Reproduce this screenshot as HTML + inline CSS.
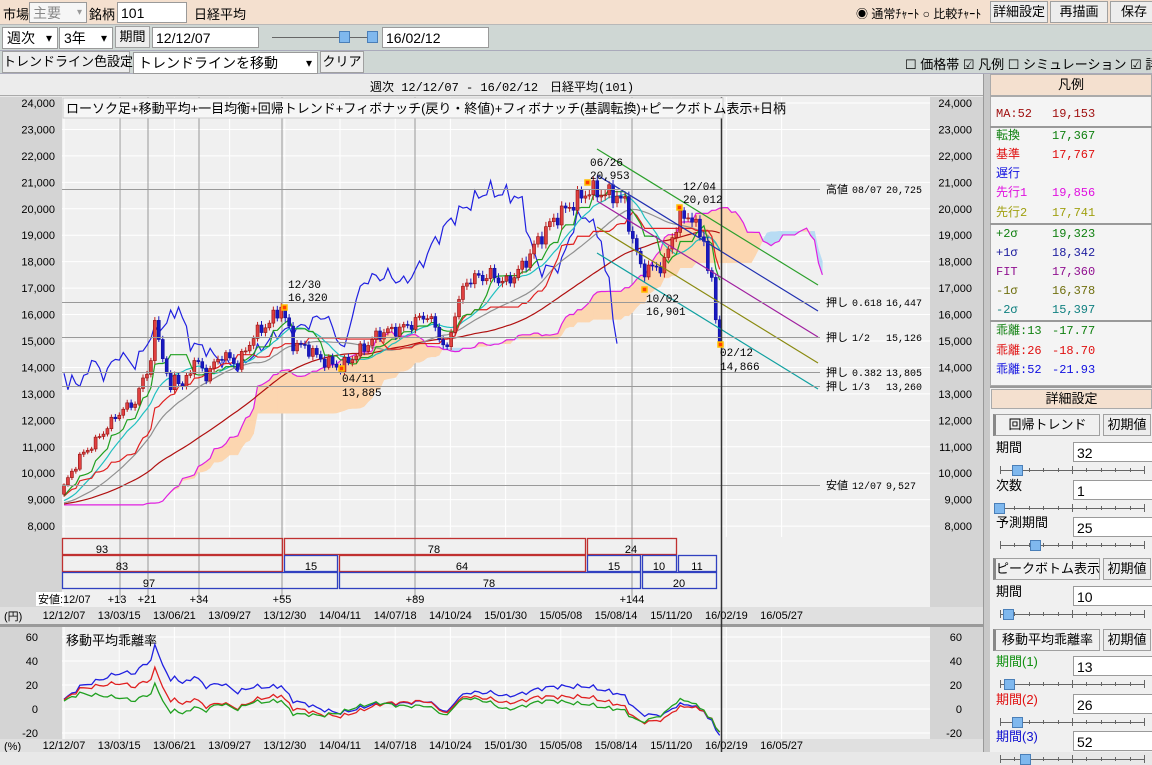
<!DOCTYPE html>
<html><head><meta charset="utf-8">
<style>
*{box-sizing:border-box;margin:0;padding:0}
body{width:1152px;height:752px;overflow:hidden;background:#e8e8e8;font-family:"Liberation Sans","Noto Sans CJK JP",sans-serif;font-size:13px;color:#000;position:relative}
.a{position:absolute;white-space:nowrap}
.bar1{left:0;top:0;width:1152px;height:25px;background:#f4e0cf;border-bottom:1px solid #b8b8b8}
.bar2{left:0;top:25px;width:1152px;height:26px;background:#cfd7d4;border-bottom:1px solid #aab}
.bar3{left:0;top:51px;width:1152px;height:23px;background:#cfd7d4;border-bottom:1px solid #aab}
.inp{background:#fff;border:1px solid #9a9a9a;height:21px;padding:1px 3px;line-height:18px;font-size:14px}
.btn{background:#ededed;border:1px solid #a0a0a0;height:22px;text-align:center;line-height:20px;font-size:13px}
.sel{background:#fff;border:1px solid #9a9a9a;height:22px;padding:0 4px;line-height:20px;font-size:14px}
.sel:after{content:"▾";position:absolute;right:5px;top:0;font-size:12px}
.lg{font-family:"Liberation Mono","Noto Sans CJK JP",monospace;font-size:12px;line-height:14px;height:14px}
.sep{height:2px;background:#999;left:990px;width:162px}
</style></head><body>
<div class="a bar1"></div>
<div class="a" style="left:3px;top:4px">市場</div>
<div class="a inp" style="left:29px;top:2px;width:58px;color:#888;background:#f6f6f6">主要<span style="position:absolute;right:4px;font-size:10px;color:#999">▾</span></div>
<div class="a" style="left:89px;top:4px">銘柄</div>
<div class="a inp" style="left:117px;top:2px;width:70px">101</div>
<div class="a" style="left:194px;top:4px">日経平均</div>
<div class="a" style="left:856px;top:5px;font-size:12px">◉ 通常ﾁｬｰﾄ ○ 比較ﾁｬｰﾄ</div>
<div class="a btn" style="left:990px;top:1px;width:58px">詳細設定</div>
<div class="a btn" style="left:1050px;top:1px;width:58px">再描画</div>
<div class="a btn" style="left:1110px;top:1px;width:48px">保存</div>
<div class="a bar2"></div>
<div class="a sel" style="left:2px;top:27px;width:56px">週次</div>
<div class="a sel" style="left:59px;top:27px;width:54px">3年</div>
<div class="a btn" style="left:115px;top:26px;width:35px">期間</div>
<div class="a inp" style="left:152px;top:27px;width:107px">12/12/07</div>
<div class="a" style="left:261px;top:27px;width:120px;height:22px;background:#cfd7d4">
 <div class="a" style="left:11px;top:10px;width:95px;height:1px;background:#666"></div>
 <div class="a" style="left:78px;top:4px;width:11px;height:12px;background:#7fb8ee;border:1px solid #4a7fb8"></div>
 <div class="a" style="left:106px;top:4px;width:11px;height:12px;background:#7fb8ee;border:1px solid #4a7fb8"></div>
</div>
<div class="a inp" style="left:382px;top:27px;width:107px">16/02/12</div>
<div class="a bar3"></div>
<div class="a btn" style="left:2px;top:51px;width:128px">トレンドライン色設定</div>
<div class="a sel" style="left:133px;top:52px;width:185px">トレンドラインを移動</div>
<div class="a btn" style="left:320px;top:51px;width:44px">クリア</div>
<div class="a" style="left:905px;top:54px;font-size:13px">☐ 価格帯 ☑ 凡例 ☐ シミュレーション ☑ 詳</div>
<div class="a" style="left:0;top:74px;width:983px;height:22px;background:#ececec;border-bottom:1px solid #aaa"></div>
<div class="a" style="left:370px;top:78px;font-family:'Liberation Mono','Noto Sans CJK JP',monospace;font-size:12px">週次 12/12/07 - 16/02/12　日経平均(101)</div>
<div class="a" style="left:983px;top:74px;width:7px;height:678px;background:#c8c8c8;border-left:1px solid #999"></div>

<svg class="a" style="left:0;top:0" width="1152" height="752" xmlns="http://www.w3.org/2000/svg" font-family="Liberation Sans, Noto Sans CJK JP, sans-serif">
 <rect x="0" y="97" width="62" height="527" fill="#d4d4d4"/>
 <rect x="62" y="97" width="868" height="527" fill="#f0f0f0"/>
 <rect x="930" y="97" width="53" height="527" fill="#d4d4d4"/>
 <rect x="0" y="607" width="983" height="17" fill="#e0e0e0"/>
 <rect x="0" y="624" width="983" height="3" fill="#9a9a9a"/>
 <rect x="0" y="627" width="62" height="125" fill="#d4d4d4"/>
 <rect x="62" y="627" width="868" height="112" fill="#f0f0f0"/>
 <rect x="930" y="627" width="53" height="125" fill="#d4d4d4"/>
 <rect x="0" y="739" width="983" height="13" fill="#e0e0e0"/>
 <g id="grid"></g>
 <g id="cloud"></g>
 <g id="lines" fill="none" stroke-width="1.2"></g>
 <g id="candles"></g>
 <g fill="none" stroke-width="1.2">
  <line x1="597" y1="149" x2="818" y2="285" stroke="#2ca02c"/>
  <line x1="597" y1="175" x2="818" y2="311" stroke="#2030b0"/>
  <line x1="597" y1="201" x2="818" y2="337" stroke="#a020a0"/>
  <line x1="597" y1="227" x2="818" y2="363" stroke="#8a8a10"/>
  <line x1="597" y1="253" x2="818" y2="389" stroke="#10a0a0"/>
 </g>
 <g stroke="#999" stroke-width="1">
  <line x1="62" y1="189.5" x2="820" y2="189.5"/>
  <line x1="62" y1="302.5" x2="820" y2="302.5"/>
  <line x1="62" y1="337.5" x2="820" y2="337.5"/>
  <line x1="62" y1="372.5" x2="820" y2="372.5"/>
  <line x1="62" y1="386.5" x2="820" y2="386.5"/>
  <line x1="62" y1="485.5" x2="820" y2="485.5"/>
 </g>
 <line x1="721.5" y1="97" x2="721.5" y2="752" stroke="#333" stroke-width="1.5"/>
 <g font-size="11" font-family="Liberation Mono, Noto Sans CJK JP, monospace">
  <g font-size="10">
  <text x="826" y="193" font-size="11">高値</text><text x="852" y="193">08/07</text><text x="886" y="193">20,725</text>
  <text x="826" y="306" font-size="11">押し</text><text x="852" y="306">0.618</text><text x="886" y="306">16,447</text>
  <text x="826" y="341" font-size="11">押し</text><text x="852" y="341">1/2</text><text x="886" y="341">15,126</text>
  <text x="826" y="376" font-size="11">押し</text><text x="852" y="376">0.382</text><text x="886" y="376">13,805</text>
  <text x="826" y="390" font-size="11">押し</text><text x="852" y="390">1/3</text><text x="886" y="390">13,260</text>
  <text x="826" y="489" font-size="11">安値</text><text x="852" y="489">12/07</text><text x="886" y="489"> 9,527</text>
  </g>
  <text x="288" y="288">12/30</text><text x="288" y="301">16,320</text>
  <text x="342" y="382">04/11</text><text x="342" y="396">13,885</text>
  <text x="590" y="166">06/26</text><text x="590" y="179">20,953</text>
  <text x="683" y="190">12/04</text><text x="683" y="203">20,012</text>
  <text x="646" y="302">10/02</text><text x="646" y="315">16,901</text>
  <text x="720" y="356">02/12</text><text x="720" y="370">14,866</text>
 </g>
 <g fill="#ff4000" stroke="#ffc000" stroke-width="1.5">
  <rect x="282" y="305" width="5" height="5"/><rect x="339" y="366" width="5" height="5"/>
  <rect x="585" y="180" width="5" height="5"/><rect x="677" y="205" width="5" height="5"/>
  <rect x="642" y="287" width="5" height="5"/><rect x="718" y="342" width="5" height="5"/>
 </g>
 <rect x="63" y="98" width="660" height="20" fill="#f6f6f6" stroke="#ccc"/>
 <text x="66" y="113" font-size="13">ローソク足+移動平均+一目均衡+回帰トレンド+フィボナッチ(戻り・終値)+フィボナッチ(基調転換)+ピークボトム表示+日柄</text>
 <g id="yax" font-size="11" text-anchor="end"></g>
 <g fill="none" stroke-width="1.3" font-size="11">
  <rect x="62.5" y="538.5" width="220" height="16" stroke="#c03030"/>
  <rect x="284.5" y="538.5" width="301" height="16" stroke="#c03030"/>
  <rect x="587.5" y="538.5" width="89" height="16" stroke="#c03030"/>
  <rect x="62.5" y="555.5" width="220" height="16" stroke="#c03030"/>
  <rect x="284.5" y="555.5" width="53" height="16" stroke="#3040c0"/>
  <rect x="339.5" y="555.5" width="246" height="16" stroke="#c03030"/>
  <rect x="587.5" y="555.5" width="53" height="16" stroke="#3040c0"/>
  <rect x="642.5" y="555.5" width="34" height="16" stroke="#3040c0"/>
  <rect x="678.5" y="555.5" width="38" height="16" stroke="#3040c0"/>
  <rect x="62.5" y="572.5" width="275" height="16" stroke="#3040c0"/>
  <rect x="339.5" y="572.5" width="301" height="16" stroke="#3040c0"/>
  <rect x="642.5" y="572.5" width="74" height="16" stroke="#3040c0"/>
 </g>
 <g font-size="11" text-anchor="middle">
  <text x="102" y="553">93</text><text x="434" y="553">78</text><text x="631" y="553">24</text>
  <text x="122" y="570">83</text><text x="311" y="570">15</text><text x="462" y="570">64</text><text x="614" y="570">15</text><text x="659" y="570">10</text><text x="697" y="570">11</text>
  <text x="149" y="587">97</text><text x="489" y="587">78</text><text x="679" y="587">20</text>
  <text x="117" y="603">+13</text><text x="147" y="603">+21</text><text x="199" y="603">+34</text><text x="282" y="603">+55</text><text x="415" y="603">+89</text><text x="632" y="603">+144</text>
 </g>
 <rect x="36" y="592" width="28" height="14" fill="#fff"/>
 <text x="38" y="603" font-size="11">安値:12/07</text>
 <text x="4" y="620" font-size="11">(円)</text>
 <text x="4" y="750" font-size="11">(%)</text>
 <g id="dates" font-size="11" text-anchor="middle"></g>
 <text x="66" y="645" font-size="13">移動平均乖離率</text>
 <g id="dev" fill="none" stroke-width="1.3"></g>
</svg>

<div class="a" style="left:990px;top:96px;width:162px;height:290px;background:#f4f4f4;border:1px solid #aaa"></div>
<div class="a" style="left:990px;top:74px;width:162px;height:22px;background:#f4e0cf;border:1px solid #aaa;text-align:center;line-height:20px">凡例</div>
<div class="a lg" style="left:996px;top:107px;color:#a01010">MA:52</div><div class="a lg" style="left:1052px;top:107px;color:#a01010">19,153</div>
<div class="a sep" style="top:126px"></div>
<div class="a lg" style="left:996px;top:129px;color:#108010">転換</div><div class="a lg" style="left:1052px;top:129px;color:#108010">17,367</div>
<div class="a lg" style="left:996px;top:148px;color:#e01010">基準</div><div class="a lg" style="left:1052px;top:148px;color:#e01010">17,767</div>
<div class="a lg" style="left:996px;top:167px;color:#1010e0">遅行</div>
<div class="a lg" style="left:996px;top:186px;color:#e010e0">先行1</div><div class="a lg" style="left:1052px;top:186px;color:#e010e0">19,856</div>
<div class="a lg" style="left:996px;top:206px;color:#a0a010">先行2</div><div class="a lg" style="left:1052px;top:206px;color:#a0a010">17,741</div>
<div class="a sep" style="top:223px"></div>
<div class="a lg" style="left:996px;top:227px;color:#108010">+2σ</div><div class="a lg" style="left:1052px;top:227px;color:#108010">19,323</div>
<div class="a lg" style="left:996px;top:246px;color:#2020a0">+1σ</div><div class="a lg" style="left:1052px;top:246px;color:#2020a0">18,342</div>
<div class="a lg" style="left:996px;top:265px;color:#901090">FIT</div><div class="a lg" style="left:1052px;top:265px;color:#901090">17,360</div>
<div class="a lg" style="left:996px;top:284px;color:#707010">-1σ</div><div class="a lg" style="left:1052px;top:284px;color:#707010">16,378</div>
<div class="a lg" style="left:996px;top:303px;color:#108080">-2σ</div><div class="a lg" style="left:1052px;top:303px;color:#108080">15,397</div>
<div class="a sep" style="top:320px"></div>
<div class="a lg" style="left:996px;top:324px;color:#108010">乖離:13</div><div class="a lg" style="left:1052px;top:324px;color:#108010">-17.77</div>
<div class="a lg" style="left:996px;top:344px;color:#e01010">乖離:26</div><div class="a lg" style="left:1052px;top:344px;color:#e01010">-18.70</div>
<div class="a lg" style="left:996px;top:363px;color:#1010e0">乖離:52</div><div class="a lg" style="left:1052px;top:363px;color:#1010e0">-21.93</div>
<div class="a" style="left:990px;top:386px;width:162px;height:366px;background:#f0f0f0;border-top:2px solid #999"></div>
<div class="a" style="left:991px;top:389px;width:161px;height:20px;background:#f4e0cf;border:1px solid #aaa;text-align:center;line-height:18px;font-size:13px">詳細設定</div>
<div id="det"></div>

<script>
(function(){
var NS="http://www.w3.org/2000/svg";
function el(p,t,a){var e=document.createElementNS(NS,t);for(var k in a)e.setAttribute(k,a[k]);document.getElementById(p).appendChild(e);return e;}
function yP(v){return 103+(24000-v)*0.026444;}
function xW(i){return 64+i*3.95;}
function yD(v){return 709-v*1.2;}
for(var v=8000;v<=24000;v+=1000){var y=yP(v);el("grid","line",{x1:62,x2:930,y1:y,y2:y,stroke:"#fff"});
 var t=el("yax","text",{x:55,y:y+4});t.textContent=(v/1000)+",000";var t2=el("yax","text",{x:972,y:y+4});t2.textContent=(v/1000)+",000";}
var dl=["12/12/07","13/03/15","13/06/21","13/09/27","13/12/30","14/04/11","14/07/18","14/10/24","15/01/30","15/05/08","15/08/14","15/11/20","16/02/19","16/05/27"];
for(var i=0;i<dl.length;i++){var x=64+i*55.2;el("grid","line",{x1:x,x2:x,y1:97,y2:537,stroke:"#fff"});el("grid","line",{x1:x,x2:x,y1:627,y2:739,stroke:"#fff"});
 var t=el("dates","text",{x:x,y:619});t.textContent=dl[i];var t2=el("dates","text",{x:x,y:749});t2.textContent=dl[i];}
[120,148,199,282,415,632].forEach(function(x){el("grid","line",{x1:x,x2:x,y1:97,y2:600,stroke:"#999"});});
[60,40,20,0,-20].forEach(function(v){var y=yD(v);el("grid","line",{x1:62,x2:930,y1:y,y2:y,stroke:"#fff"});
 var t=el("yax","text",{x:38,y:y+4});t.textContent=v;var t2=el("yax","text",{x:962,y:y+4});t2.textContent=v;});
var K=[[0,9500],[4,10600],[8,11200],[14,12300],[18,12700],[22,14300],[23,15600],[25,14500],[27,13000],[28,13800],[30,13200],[33,14300],[36,13700],[40,14500],[44,14100],[48,15200],[52,15700],[55,16300],[58,14900],[62,14700],[65,14300],[70,14000],[74,14500],[80,15300],[86,15500],[92,16000],[95,15200],[97,14600],[99,16100],[102,17300],[108,17500],[112,17200],[116,17800],[120,18800],[124,19600],[128,20100],[133,20700],[136,20600],[140,20500],[142,20200],[144,18800],[146,17800],[148,17700],[152,17900],[154,19000],[156,19600],[158,19800],[160,19300],[162,18900],[163,17600],[164,17200],[165,16000],[166,14900]];
var P=52,N=167,c=[];
for(var i=-P;i<0;i++)c.push(8800+Math.sin(i*0.9)*120+(i>-6?(i+6)*100:0));
for(var i=0;i<N;i++){var j=0;while(j<K.length-1&&K[j+1][0]<i)j++;var a=K[j],b=K[Math.min(j+1,K.length-1)];
 var v=b[0]==a[0]?a[1]:a[1]+(b[1]-a[1])*(i-a[0])/(b[0]-a[0]);
 if(i<N-1)v+=v*0.012*(Math.sin(i*1.7)+0.6*Math.sin(i*3.1+1));c.push(v);}
function C(i){return c[i+P];}
function ma(i,n){var s=0;for(var k=0;k<n;k++)s+=C(i-k);return s/n;}
function mid(i,n){var h=-1e9,l=1e9;for(var k=0;k<n;k++){var v=C(i-k);h=Math.max(h,v*1.01);l=Math.min(l,v*0.99);}return (h+l)/2;}
function pl(g,pts,col){el(g,"polyline",{points:pts.join(" "),stroke:col});}
var m13=[],m26=[],m52=[],tk=[],kj=[],ck=[];
for(var i=0;i<N;i++){var x=xW(i);m13.push(x+","+yP(ma(i,13)));m26.push(x+","+yP(ma(i,26)));m52.push(x+","+yP(ma(i,52)));
 tk.push(x+","+yP(mid(i,9)));kj.push(x+","+yP(mid(i,26)));if(i>=26)ck.push(xW(i-26)+","+yP(C(i)));}
var s1=[],s2=[];
for(var i=-26;i<N;i++){s1.push((mid(i,9)+mid(i,26))/2);s2.push(mid(i,52));}
for(var k=0;k<s1.length-1;k++){var i=k;var x0=xW(i),x1=xW(i+1);
 var col=s1[k]>=s2[k]?"#fcd6b0":"#b8dcf4";
 el("cloud","polygon",{points:x0+","+yP(s1[k])+" "+x1+","+yP(s1[k+1])+" "+x1+","+yP(s2[k+1])+" "+x0+","+yP(s2[k]),fill:col,stroke:col,"stroke-width":0.5});}
var p1=[],p2=[];for(var k=0;k<s1.length;k++){p1.push(xW(k)+","+yP(s1[k]));p2.push(xW(k)+","+yP(s2[k]));}
pl("lines",p2,"#b0a020");pl("lines",p1,"#e020e0");
pl("lines",ck,"#2020e0");pl("lines",m52,"#b01010");pl("lines",m26,"#909090");pl("lines",m13,"#20c0c0");
pl("lines",kj,"#e02020");pl("lines",tk,"#20a020");
for(var i=0;i<N;i++){var o=C(i-1),cl=C(i),x=xW(i);var hi=Math.max(o,cl)*(1.006+0.004*Math.abs(Math.sin(i*2.3))),lo=Math.min(o,cl)*(0.994-0.004*Math.abs(Math.cos(i*1.9)));
 var up=cl>=o,col=up?"#c02020":"#1818c0";
 el("candles","line",{x1:x,x2:x,y1:yP(hi),y2:yP(lo),stroke:col});
 var yt=yP(Math.max(o,cl)),yb=yP(Math.min(o,cl));
 el("candles","rect",{x:x-1.5,y:yt,width:3,height:Math.max(1,yb-yt),fill:up?"#e04040":"#1818c0",stroke:up?"#901010":"#1010a0","stroke-width":0.6});}
var d1=[],d2=[],d3=[];
for(var i=0;i<N;i++){var x=xW(i);d1.push(x+","+yD((C(i)/ma(i,13)-1)*100));d2.push(x+","+yD((C(i)/ma(i,26)-1)*100));d3.push(x+","+yD((C(i)/ma(i,52)-1)*100));}
pl("dev",d3,"#2020e0");pl("dev",d2,"#e02020");pl("dev",d1,"#20a020");
var H="";
function sec(y,t){H+='<div class="a btn" style="left:993px;top:'+y+'px;width:107px;height:22px;font-size:13px;background:#f0f0f0;border-left:3px solid #888">'+t+'</div><div class="a btn" style="left:1103px;top:'+y+'px;width:48px;height:22px">初期値</div>';}
function row(y,t,v,col,k){H+='<div class="a" style="left:996px;top:'+(y-12)+'px;font-size:13px;line-height:16px;color:'+col+'">'+t+'</div><div class="a inp" style="left:1073px;top:'+(y-10)+'px;width:80px;height:20px">'+v+'</div>';
 var sy=y+18;H+='<div class="a" style="left:1000px;top:'+sy+'px;width:144px;height:1px;background:#666"></div>';
 for(var q=0;q<=10;q++)H+='<div class="a" style="left:'+(1000+q*14.4)+'px;top:'+(sy-(q==5||q==0||q==10?4:2))+'px;width:1px;height:'+(q==5||q==0||q==10?8:4)+'px;background:#666"></div>';
 H+='<div class="a" style="left:'+(1000+k)+'px;top:'+(sy-5)+'px;width:11px;height:11px;background:#7fb8ee;border:1px solid #4a7fb8"></div>';}
sec(414,"回帰トレンド");row(452,"期間","32","#000",12);row(490,"次数","1","#000",-6);row(527,"予測期間","25","#000",30);
sec(558,"ピークボトム表示");row(596,"期間","10","#000",3);
sec(629,"移動平均乖離率");row(666,"期間(1)","13","#109010",4);row(704,"期間(2)","26","#e01010",12);row(741,"期間(3)","52","#1010d0",20);
document.getElementById("det").innerHTML=H;
})();
</script>
</body></html>
